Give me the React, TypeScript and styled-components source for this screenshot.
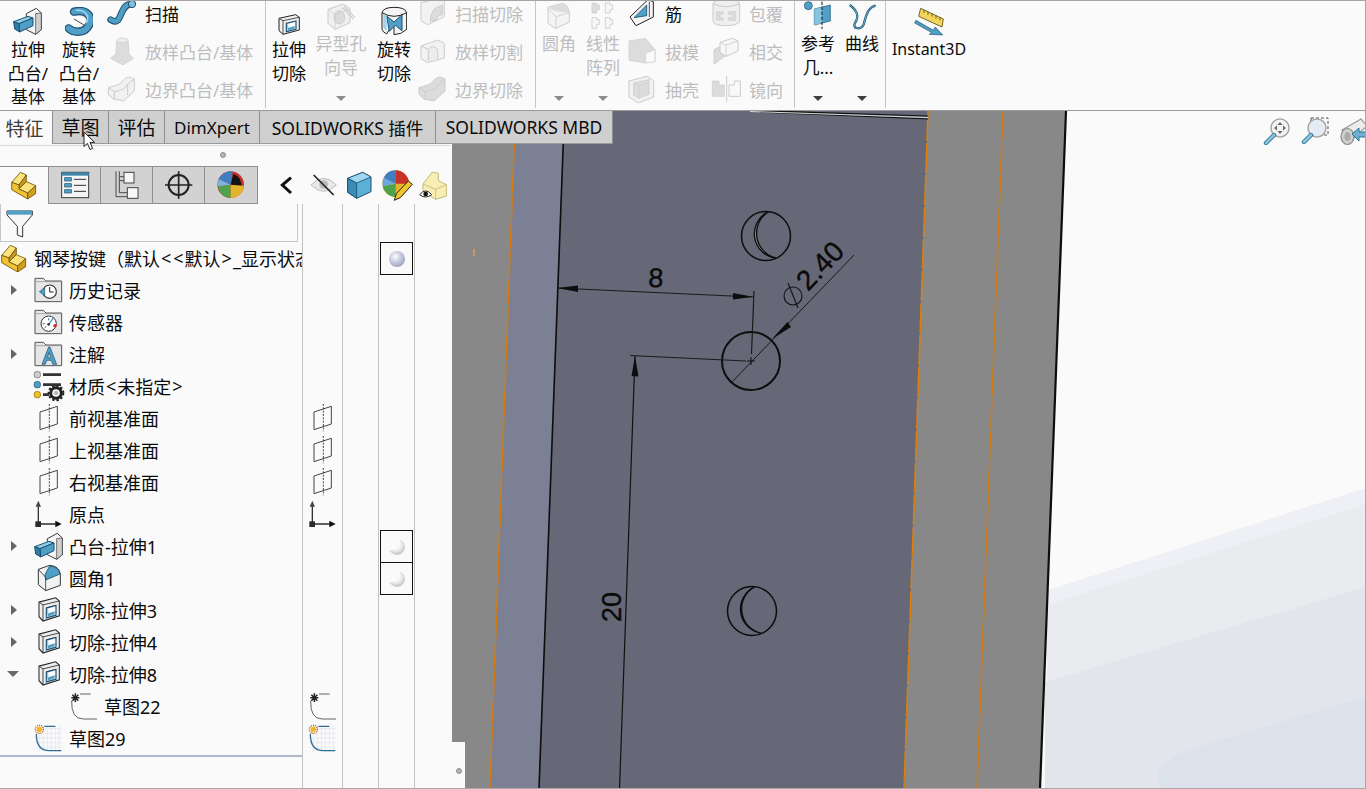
import React from 'react';
import styled, { createGlobalStyle } from 'styled-components';

const Global = createGlobalStyle`
  html, body { margin: 0; padding: 0; background: #fafafa; }
  * { box-sizing: border-box; }
`;

const FONT = `"Noto Sans", "Noto Sans CJK SC", sans-serif`;
const OFF = '#bdbdbd';

/* ---------- page frame ---------- */
const App_ = styled.div`
  width: 1366px; height: 789px; display: flex; flex-direction: column; overflow: hidden;
  background: #fafafa; border-top: 1px solid #a5a5a5; border-right: 1px solid #a8a8a8; border-bottom: 1px solid #a8a8a8;
  font-family: ${FONT}; color: #0a0a0a;
`;
const Ribbon = styled.div`
  height: 110px; flex: none; display: flex; align-items: flex-start; border-bottom: 1px solid #9c9c9c; overflow: hidden;
`;
const Group = styled.div<{ $w: number; $pad?: number }>`
  width: ${p => p.$w}px; height: 107px; flex: none; display: flex; padding-left: ${p => p.$pad ?? 0}px;
  border-right: 1px solid #c4c4c4;
`;
const LargeBtn = styled.div<{ $w: number; $off?: boolean; $fs?: number }>`
  width: ${p => p.$w}px; height: 107px; flex: none; display: flex; flex-direction: column; align-items: center;
  font-size: ${p => p.$fs ?? 17}px; line-height: 23.5px; color: ${p => (p.$off ? OFF : '#0a0a0a')}; white-space: nowrap;
`;
const LargeIcon = styled.div<{ $h: number }>`
  height: ${p => p.$h}px; flex: none; display: flex; align-items: flex-end; justify-content: center; padding-bottom: 2px;
  svg { display: block; flex: none; }
`;
const Caret = styled.i<{ $off?: boolean }>`
  margin-top: auto; margin-bottom: 7px; width: 0; height: 0;
  border-left: 5px solid transparent; border-right: 5px solid transparent;
  border-top: 5px solid ${p => (p.$off ? '#8c8c8c' : '#404040')};
`;
const SmallCol = styled.div<{ $w: number; $ml?: number }>`
  width: ${p => p.$w}px; flex: none; margin-left: ${p => p.$ml ?? 0}px; margin-top: -7px; display: flex; flex-direction: column;
`;
const SmallBtn = styled.div<{ $off?: boolean }>`
  height: 38px; display: flex; align-items: center; font-size: 17px; white-space: nowrap;
  color: ${p => (p.$off ? OFF : '#0a0a0a')};
`;
const SmallIcon = styled.div`
  width: 30px; margin-right: 8px; flex: none; display: flex; justify-content: center;
  svg { display: block; flex: none; }
`;

/* ---------- main ---------- */
const Main = styled.div`
  flex: 1; min-height: 0; display: flex; position: relative;
`;
const TabBar = styled.div`
  position: absolute; top: -1px; left: 0; display: flex; height: 34px; z-index: 3;
`;
const Tab = styled.div<{ $w: number; $on?: boolean; $fs?: number }>`
  width: ${p => p.$w}px; height: 34px; flex: none; display: flex; align-items: center; justify-content: center;
  font-size: ${p => p.$fs ?? 18}px; white-space: nowrap;
  padding-right: ${p => (p.$on ? 3 : 0)}px;
  color: ${p => (p.$on ? '#3c3c3c' : '#0a0a0a')};
  background: ${p => (p.$on ? 'transparent' : '#cfcfcf')};
  border-right: 1px solid #8e8e8e; border-top: 1px solid #9c9c9c;
  border-bottom: ${p => (p.$on ? 'none' : '1px solid #9a9a9a')};
`;
const Cursor = styled.svg`
  position: absolute; left: 83px; top: 20px; z-index: 4;
`;

const Sidebar = styled.aside`
  width: 452px; flex: none; display: flex; flex-direction: column; padding-top: 32px; background: #fafafa;
`;
const Grip = styled.div`
  height: 21px; flex: none; margin-top: 2px; border-top: 1px solid #d8d8d8; display: flex; align-items: center; justify-content: center;
  margin-right: 2px; padding-bottom: 3px; padding-right: 4px;
`;
const Dot = styled.i`
  width: 6px; height: 6px; border-radius: 50%; background: #b4b4b4; border: 1px solid #8f8f8f;
`;
const FeatureBar = styled.div`
  height: 38px; flex: none; display: flex; align-items: stretch;
`;
const FeatureTab = styled.div<{ $on?: boolean; $w?: number }>`
  width: ${p => p.$w ?? 52}px; flex: none; display: flex; align-items: center; justify-content: center;
  background: ${p => (p.$on ? 'transparent' : '#d2d2d2')};
  border-right: 1px solid #8e8e8e; border-top: 1px solid #8e8e8e;
  border-bottom: ${p => (p.$on ? 'none' : '1px solid #8e8e8e')};
`;
const ToolStrip = styled.div`
  flex: 1; display: flex; align-items: center; padding-left: 21px; gap: 8px;
  svg { display: block; flex: none; }
  svg:first-child { margin-right: 8px; }
  svg:last-child { margin-left: -3px; }
`;
const Columns = styled.div`
  flex: 1; min-height: 0; display: flex;
`;
const TreeCol = styled.div`
  width: 302px; flex: none; overflow: hidden;
`;
const Filter = styled.div`
  width: 298px; height: 38px; border: 1px solid #c6c6c6; border-top: none; padding-left: 5px; padding-top: 2px; display: flex; align-items: center;
`;
const Rows = styled.div`
  border-bottom: 2px solid #b3b7cb; padding-bottom: 1px;
`;
const Row = styled.div<{ $indent?: number }>`
  height: 32px; display: flex; align-items: center; padding-left: ${p => p.$indent ?? 0}px;
  font-size: 18px; white-space: nowrap; color: #0a0a0a;
`;
const Angle = styled.span`
  padding: 0 1px;
`;
const ArrowSlot = styled.div`
  width: 26px; flex: none; display: flex; justify-content: center;
`;
const Arrow = styled.i<{ $open?: boolean }>`
  width: 0; height: 0;
  ${p => p.$open
    ? 'border-left: 6px solid transparent; border-right: 6px solid transparent; border-top: 6px solid #6a6a6a;'
    : 'border-top: 5px solid transparent; border-bottom: 5px solid transparent; border-left: 6px solid #666; margin-left:1px;'}
`;
const TreeIcon = styled.div`
  width: 29px; margin-left: 8px; margin-right: 6px; flex: none; display: flex; justify-content: center;
  svg { display: block; flex: none; }
`;
const RootIcon = styled.div`
  width: 27px; margin-left: 1px; margin-right: 6px; flex: none; display: flex;
  svg { display: block; flex: none; }
`;
const Col = styled.div<{ $w: number }>`
  width: ${p => p.$w}px; flex: none; border-left: 1px solid #c2c2c2; padding-top: 38px; overflow: hidden;
`;
const Slot = styled.div`
  height: 32px; display: flex; align-items: center; justify-content: center;
  svg { display: block; flex: none; }
`;
const SphereSlot = styled.div`
  height: 32px; padding-left: 1px;
`;
const SphereBox = styled.div`
  width: 33px; height: 33px; border: 1px solid #111; display: flex; align-items: center; justify-content: center; background: #fafafa;
`;

const Viewport = styled.main`
  flex: 1; min-width: 0; position: relative; overflow: hidden; background: #fafafa;
  > svg { display: block; }
`;
const ViewTools = styled.div`
  position: absolute; top: 6px; right: -1px; display: flex; gap: 10px;
  svg { display: block; }
`;
const CornerBlock = styled.div`
  position: absolute; left: 0; bottom: 0; width: 13px; height: 46px; background: #fafafa;
  display: flex; align-items: center; justify-content: center; padding-top: 11px;
`;

/* ---------- icon helper: coordinates are 3x those of the screen ---------- */
const Ico: React.FC<{ vb: string; h?: number; children: React.ReactNode }> = ({ vb, h, children }) => {
  const [, , vw, vh] = vb.split(' ').map(Number);
  return <svg width={vw / 3} height={h ?? vh / 3} viewBox={vb} preserveAspectRatio={h ? 'none' : undefined}>{children}</svg>;
};
const DS = '#cbcbcb';
const DF = '#ececec';
const DM = '#dcdcdc';
const BL = '#4f9fc6';
const BD = '#1c4f70';

const Boss = () => (
  <Ico vb="40 22 88 86">
    <path d="M80 42 L110 26 L125 40 V90 L108 104 L80 90Z" fill="#f4f4f4" stroke="#3a3a3a" strokeWidth="3" />
    <path d="M108 42 L125 40 V90 L108 104Z" fill="#cfcfcf" stroke="#3a3a3a" strokeWidth="2" />
    <path d="M42 66 L85 50 L100 55 L58 72Z" fill="#8fd0e8" stroke={BD} strokeWidth="3" />
    <path d="M58 72 L100 55 V78 L60 97Z" fill={BL} stroke={BD} strokeWidth="3" />
    <path d="M42 66 L58 72 L60 97 L45 88Z" fill="#2f7ea6" stroke={BD} strokeWidth="3" />
  </Ico>
);
const RevBoss = () => (
  <Ico vb="195 22 84 88">
    <path d="M222 36 C268 26 282 60 262 84 C248 102 218 98 206 86" fill="none" stroke={BD} strokeWidth="25" strokeLinecap="round" />
    <path d="M222 36 C268 26 282 60 262 84 C248 102 218 98 206 86" fill="none" stroke={BL} strokeWidth="18" strokeLinecap="round" />
    <path d="M228 32 C258 30 270 50 258 70" fill="none" stroke="#9fd6ec" strokeWidth="5" />
    <path d="M222 58 L252 76" stroke="#222" strokeWidth="2.5" />
  </Ico>
);
const Sweep = () => (
  <Ico vb="322 0 94 84">
    <path d="M336 62 C372 86 360 16 396 16" fill="none" stroke={BD} strokeWidth="20" strokeLinecap="round" />
    <path d="M336 62 C372 86 360 16 396 16" fill="none" stroke={BL} strokeWidth="14" strokeLinecap="round" />
    <circle cx="400" cy="15" r="11" fill="#7fc0de" stroke={BD} strokeWidth="3" />
  </Ico>
);
const Loft = () => (
  <Ico vb="332 108 76 84">
    <path d="M355 120 Q372 108 390 120 L392 160 L406 172 L374 192 L336 172 L352 160Z" fill={DM} stroke={DS} strokeWidth="2" />
    <ellipse cx="372" cy="118" rx="17" ry="7" fill={DF} stroke={DS} strokeWidth="2" />
  </Ico>
);
const Boundary = () => (
  <Ico vb="326 224 88 84">
    <path d="M330 262 C350 255 365 255 375 240 C385 228 395 228 408 236 V272 L375 302 L345 296 L330 282Z" fill="#f1f1f1" stroke={DS} strokeWidth="3" />
    <path d="M330 262 L348 274 C362 270 378 270 388 252 L408 236 M348 274 V296 M388 252 V284" fill="none" stroke={DS} strokeWidth="3" />
  </Ico>
);
const Hole = () => (
  <Ico vb="978 2 90 85">
    <path d="M984 24 L1030 8 L1050 22 V64 L1006 84 L984 66Z" fill="#f0f0f0" stroke={DS} strokeWidth="3" />
    <ellipse cx="1018" cy="48" rx="16" ry="20" fill={DM} stroke={DS} strokeWidth="3" />
    <path d="M1030 18 L1062 50" stroke={DS} strokeWidth="12" strokeDasharray="4 3" />
    <path d="M984 24 L1006 40 L1050 22 M1006 40 V84" fill="none" stroke={DS} strokeWidth="2" />
  </Ico>
);
const Cut: React.FC<{ h?: number }> = ({ h }) => (
  <Ico vb="832 42 72 66" h={h}>
    <path d="M838 55 L888 44 L899 52 V90 L850 103 L838 92Z" fill="#efefef" stroke="#222" strokeWidth="3" />
    <path d="M850 62 L899 52 M850 62 V103 M850 62 L838 55" fill="none" stroke="#333" strokeWidth="2.5" />
    <path d="M860 70 L889 63 V88 L860 95Z" fill="#fdfdfd" stroke={BD} strokeWidth="3.5" />
    <path d="M864 84 L885 78 V86 L864 92Z" fill={BL} />
    <path d="M862 72 L866 74 V84 L862 90Z" fill="#8ecbe5" />
  </Ico>
);
const RevCut = () => (
  <Ico vb="1143 18 80 90">
    <path d="M1146 38 Q1150 22 1182 22 Q1216 22 1220 38 V88 Q1204 104 1182 104 L1182 66 L1160 102 Q1148 96 1146 88Z" fill="#f4f4f4" stroke="#222" strokeWidth="3" />
    <path d="M1160 48 L1182 66 L1206 44 L1206 92 L1186 76 L1168 94Z" fill={BL} stroke={BD} strokeWidth="3" />
    <path d="M1146 38 Q1182 60 1220 38" fill="none" stroke="#222" strokeWidth="3" />
    <path d="M1150 42 L1160 48 V92 L1150 84Z" fill="#9ed3ea" />
  </Ico>
);
const SweepCut = () => (
  <Ico vb="1262 0 80 88">
    <path d="M1268 14 L1320 2 L1338 8 V56 L1288 80 L1268 68Z" fill="#f2f2f2" stroke={DS} strokeWidth="3" />
    <path d="M1296 70 Q1296 28 1332 22 V50 Q1314 52 1314 66Z" fill={DM} stroke={DS} strokeWidth="3" />
  </Ico>
);
const LoftCut = () => (
  <Ico vb="1262 106 80 78">
    <path d="M1268 130 L1318 112 L1338 122 V166 L1288 180 L1268 168Z" fill="#f2f2f2" stroke={DS} strokeWidth="3" />
    <path d="M1290 176 V140 Q1302 124 1318 140 V168" fill={DF} stroke={DS} strokeWidth="3" />
    <path d="M1268 130 L1290 140" stroke={DS} strokeWidth="3" />
  </Ico>
);
const BoundaryCut = () => (
  <Ico vb="1256 224 88 84">
    <path d="M1262 262 C1282 255 1297 255 1307 240 C1317 228 1327 228 1340 236 V272 L1307 302 L1277 296 L1262 282Z" fill={DM} stroke={DS} strokeWidth="3" />
    <path d="M1262 262 L1280 274 C1294 270 1310 270 1320 252 L1340 236 M1280 274 V296" fill="none" stroke={DS} strokeWidth="3" />
  </Ico>
);
const Fillet = () => (
  <Ico vb="262 2 76 84">
    <path d="M268 18 L312 6 Q330 12 332 34 V62 L290 82 L268 66Z" fill="#f3f3f3" stroke={DS} strokeWidth="3" />
    <path d="M270 20 L292 30 L332 34 Q328 14 312 8Z" fill={DM} />
    <path d="M292 46 L332 34 M292 46 V82 M268 22 L292 46" fill="none" stroke={DS} strokeWidth="2.5" />
  </Ico>
);
const Pattern = () => (
  <Ico vb="392 2 76 86">
    <path d="M398 12 H412 V18 H420 V32 H412 V42 H398Z" fill={DM} stroke={DS} strokeWidth="2" transform="translate(0 -4)" />
    <path d="M438 8 H452 V14 H460 V28 H452 V38 H438Z" fill="#f7f7f7" stroke={DS} strokeWidth="2.5" />
    <path d="M398 52 H412 V58 H420 V72 H412 V84 H398Z" fill="#f7f7f7" stroke={DS} strokeWidth="2.5" />
    <path d="M438 52 H452 V58 H460 V72 H452 V84 H438Z" fill="#f7f7f7" stroke={DS} strokeWidth="2.5" />
  </Ico>
);
const Rib = () => (
  <Ico vb="506 0 82 84">
    <path d="M512 54 L566 2 L582 8 V54 L530 80Z" fill="#f4f4f4" stroke="#222" strokeWidth="3" />
    <path d="M524 56 L562 18 L562 50Z" fill={BL} stroke={BD} strokeWidth="2.5" />
    <path d="M570 8 V54" stroke="#333" strokeWidth="2.5" />
  </Ico>
);
const Wrap = () => (
  <Ico vb="756 0 90 84">
    <path d="M762 14 Q764 0 800 0 Q840 0 842 14 V66 Q838 80 800 80 Q764 80 762 66Z" fill="#efefef" stroke={DS} strokeWidth="3" />
    <path d="M762 14 Q800 32 842 14" fill="none" stroke={DS} strokeWidth="3" />
    <path d="M772 38 H792 V46 H782 V56 H792 V64 H772Z M808 38 H830 V64 H808 V56 H820 V46 H808Z" fill={DM} stroke={DS} strokeWidth="2" />
  </Ico>
);
const Draft = () => (
  <Ico vb="504 112 88 82">
    <path d="M510 124 L560 116 L588 150 V186 L556 190 L510 182Z" fill={DM} stroke={DS} strokeWidth="2" />
    <path d="M560 160 L588 150 V186 L560 190Z" fill="#fafafa" stroke={DS} strokeWidth="2" />
  </Ico>
);
const Intersect = () => (
  <Ico vb="758 108 84 86">
    <path d="M764 146 L796 130 V166 L764 190Z" fill={DM} stroke={DS} strokeWidth="2.5" />
    <path d="M782 124 L818 112 L836 120 V150 L800 166 L782 154Z" fill="#f7f7f7" stroke={DS} strokeWidth="3" />
    <path d="M782 124 L800 132 L836 120 M800 132 V166" fill="none" stroke={DS} strokeWidth="2.5" />
  </Ico>
);
const Shell = () => (
  <Ico vb="506 222 88 86">
    <path d="M512 240 L566 226 L586 240 V288 L540 306 L512 288Z" fill="#f2f2f2" stroke={DS} strokeWidth="3" />
    <path d="M526 246 L572 236 V280 L540 292 L526 282Z" fill={DM} stroke={DS} strokeWidth="2.5" />
    <path d="M526 246 L542 256 L572 246 M542 256 V292" fill="none" stroke={DS} strokeWidth="2" />
  </Ico>
);
const Mirror = () => (
  <Ico vb="756 224 92 84">
    <path d="M760 242 H780 V254 H796 V288 H760Z" fill={DM} stroke={DS} strokeWidth="2" />
    <path d="M803 228 V304" stroke={DS} strokeWidth="3" />
    <path d="M844 242 H826 V254 H810 V288 H844Z" fill="#f9f9f9" stroke={DS} strokeWidth="3" />
  </Ico>
);
const RefGeom = () => (
  <Ico vb="1030 2 88 86">
    <circle cx="1046" cy="16" r="12" fill={BL} stroke={BD} strokeWidth="2" />
    <path d="M1064 26 L1112 14 V62 L1064 74Z" fill={BL} stroke={BD} strokeWidth="2" />
    <path d="M1064 26 L1088 20 V68 L1064 74Z" fill="#86c3de" />
    <path d="M1087 4 V86" stroke="#111" strokeWidth="3" strokeDasharray="10 5" />
  </Ico>
);
const Curves = () => (
  <Ico vb="1162 6 92 82">
    <path d="M1170 12 C1190 26 1200 46 1186 66 C1176 84 1206 88 1212 70 C1220 40 1226 18 1248 14" fill="none" stroke={BD} strokeWidth="7" />
    <path d="M1170 12 C1190 26 1200 46 1186 66 C1176 84 1206 88 1212 70 C1220 40 1226 18 1248 14" fill="none" stroke="#6fb5d6" strokeWidth="3" />
  </Ico>
);
const Instant = () => (
  <Ico vb="1362 22 92 88">
    <path d="M1382 26 L1450 58 L1446 82 L1376 50Z" fill="#f2d75c" stroke="#5a4a10" strokeWidth="2.5" />
    <path d="M1392 30 V40 M1404 36 V46 M1416 41 V51 M1428 47 V57 M1440 52 V62" stroke="#5a4a10" strokeWidth="2.5" />
    <path d="M1368 62 L1420 92 L1426 82 L1448 106 L1408 104 L1414 98 L1364 70Z" fill={BL} stroke={BD} strokeWidth="2" />
  </Ico>
);

/* tree icons */
const Part: React.FC = () => (
  <Ico vb="6 116 78 86">
    <path d="M8 150 L34 120 L52 128 L30 158Z" fill="#fbe27a" stroke="#6d5510" strokeWidth="2.5" />
    <path d="M30 158 L52 128 V148 L30 170Z" fill="#c8961c" stroke="#6d5510" strokeWidth="2.5" />
    <path d="M30 170 L52 148 L80 160 L56 182Z" fill="#fbe27a" stroke="#6d5510" strokeWidth="2.5" />
    <path d="M8 150 L30 158 V170 L56 182 V200 L8 172Z" fill="#eec233" stroke="#6d5510" strokeWidth="2.5" />
    <path d="M56 182 L80 160 V184 L56 200Z" fill="#d09f1e" stroke="#6d5510" strokeWidth="2.5" />
  </Ico>
);
const Folder: React.FC<{ children: React.ReactNode }> = ({ children }) => (
  <Ico vb="104 218 86 78">
    <path d="M107 292 V222 H132 L140 230 H187 V292Z" fill="#e6e6e6" stroke="#555" strokeWidth="3" />
    <path d="M107 232 H187" stroke="#888" strokeWidth="2" />
    {children}
  </Ico>
);
const Material = () => (
  <Ico vb="98 493 96 94">
    <circle cx="111" cy="507" r="10" fill="#cfcfcf" stroke="#666" strokeWidth="2" />
    <circle cx="111" cy="537" r="10" fill={BL} stroke={BD} strokeWidth="2" />
    <circle cx="111" cy="567" r="10" fill="#f0c020" stroke="#8a6a10" strokeWidth="2" />
    <path d="M128 507 H182 M128 537 H182 M128 567 H146" stroke="#333" strokeWidth="8" />
    <circle cx="167" cy="562" r="16" fill="none" stroke="#222" strokeWidth="9" />
    <circle cx="167" cy="562" r="22" fill="none" stroke="#222" strokeWidth="6" strokeDasharray="7 6" />
    <circle cx="167" cy="562" r="7" fill="#bbb" />
  </Ico>
);
const Plane = () => (
  <Ico vb="118 596 60 82">
    <path d="M121 620 L173 603 V656 L121 673Z" fill="none" stroke="#444" strokeWidth="3" />
    <path d="M149 596 V678" stroke="#222" strokeWidth="2.5" strokeDasharray="6 4" />
  </Ico>
);
const Origin = () => (
  <Ico vb="104 0 86 82">
    <path d="M117 72 V14" stroke="#333" strokeWidth="4" />
    <path d="M117 2 L125 20 H109Z" fill="#444" />
    <path d="M117 72 H172" stroke="#111" strokeWidth="4" />
    <path d="M187 72 L168 62 V82Z" fill="#111" />
    <rect x="108" y="64" width="17" height="17" fill="#2a2a2a" />
  </Ico>
);
const Fillet1 = () => (
  <Ico vb="112 192 72 82">
    <path d="M116 208 L150 196 Q178 198 182 222 V256 L138 272 L116 254Z" fill="#f1f2f4" stroke="#333" strokeWidth="3" />
    <path d="M136 224 L150 198 Q176 200 181 222 L138 240Z" fill={BL} stroke={BD} strokeWidth="2.5" />
    <path d="M116 208 L138 232 V272" fill="none" stroke="#333" strokeWidth="2.5" />
  </Ico>
);
const SketchBlack = () => (
  <Ico vb="210 574 84 84">
    <path d="M215 600 Q213 655 250 655 H291 M240 580 H272" fill="none" stroke="#444" strokeWidth="2.5" />
    <path d="M226 578 V604 M214 591 H238 M217 582 L235 600 M235 582 L217 600" stroke="#222" strokeWidth="4.5" />
  </Ico>
);
const SketchBlue = () => {
  const g = [120, 132, 144, 156, 168, 180];
  return (
    <Ico vb="104 670 86 86">
      {g.map(v => <path key={v} d={`M${v} 674 V754`} stroke="#dfe3ec" strokeWidth="2" />)}
      {[684, 698, 712, 726, 740].map(v => <path key={v} d={`M108 ${v} H188`} stroke="#dfe3ec" strokeWidth="2" />)}
      <path d="M111 700 Q111 750 150 750 H186 M135 677 H168" fill="none" stroke="#2d6f99" strokeWidth="4" />
      <circle cx="120" cy="686" r="8" fill="#f2b420" />
      <circle cx="120" cy="686" r="12" fill="none" stroke="#b8560c" strokeWidth="4" strokeDasharray="3 3" />
    </Ico>
  );
};
const ClockFace = () => (
  <g>
    <circle cx="151" cy="262" r="20" fill="#fff" stroke="#333" strokeWidth="3.5" />
    <path d="M151 248 V263 H163" fill="none" stroke="#222" strokeWidth="3" />
    <path d="M120 262 L136 250 V274Z" fill={BL} stroke={BD} strokeWidth="2" />
  </g>
);
const GaugeFace = () => (
  <g>
    <circle cx="148" cy="262" r="23" fill="#fff" stroke="#333" strokeWidth="3" />
    <path d="M148 264 L164 242" stroke={BL} strokeWidth="4" />
    <circle cx="148" cy="264" r="4" fill="#333" />
    <path d="M130 262 H136 M148 246 V252 M136 274 L141 270" stroke="#333" strokeWidth="2.5" />
    <circle cx="167" cy="268" r="5" fill="#e02020" />
  </g>
);
const LetterA = () => (
  <path d="M148 236 L128 288 H138 L142 276 H156 L160 288 H172 L152 236Z M145 268 L149 252 L154 268Z" fill={BL} stroke={BD} strokeWidth="2" fillRule="evenodd" />
);

/* toolbar icons */
const Ball: React.FC = () => (
  <Ico vb="650 512 88 84">
    <circle cx="694" cy="553" r="40" fill="#c8302a" />
    <path d="M694 553 L702 520 Q730 530 726 566Z" fill="#141414" />
    <path d="M694 553 L658 536 A40 40 0 0 1 700 513.4Z" fill="#3f7fc0" />
    <path d="M694 553 L656 558 A40 40 0 0 0 694 593Z" fill="#4ea24a" />
    <path d="M694 553 L694 593 A40 40 0 0 0 734 556Z" fill="#e3b32a" />
    <path d="M694 553 L658 536 A40 40 0 0 0 655 558Z" fill="#7fb2de" />
  </Ico>
);
const ListIcon = () => (
  <Ico vb="180 514 90 84">
    <rect x="185" y="518" width="81" height="76" fill="#f5f5f5" stroke="#3a3a3a" strokeWidth="3" />
    <rect x="185" y="518" width="81" height="10" fill="#3f86ad" />
    {[538, 556, 574].map(y => (
      <g key={y}>
        <rect x="194" y={y - 4} width="20" height="10" fill={BL} stroke={BD} strokeWidth="2" />
        <path d={`M222 ${y + 1} H258`} stroke="#333" strokeWidth="3" />
      </g>
    ))}
  </Ico>
);
const ConfigIcon = () => (
  <Ico vb="344 510 78 90">
    <path d="M350 514 V590 H384 M360 514 V578 H384 M360 530 H374 M360 542 H374" stroke="#4a4a4a" strokeWidth="3" fill="none" />
    <rect x="374" y="517" width="30" height="32" fill="#f7f7f7" stroke="#444" strokeWidth="3" />
    <rect x="384" y="563" width="32" height="32" fill="#f7f7f7" stroke="#444" strokeWidth="3" />
  </Ico>
);
const Cross = () => (
  <Ico vb="494 510 88 90">
    <circle cx="538" cy="555" r="30" fill="none" stroke="#222" strokeWidth="6" />
    <path d="M538 514 V596 M497 555 H579" stroke="#222" strokeWidth="5" />
  </Ico>
);
const Chevron = () => (
  <Ico vb="836 518 42 60">
    <path d="M872 526 L846 548 L872 572" fill="none" stroke="#111" strokeWidth="9" />
  </Ico>
);
const Eye = () => (
  <Ico vb="926 516 88 72">
    <path d="M932 552 Q970 512 1008 552 Q970 590 932 552Z" fill="#e8e8e8" stroke="#bbb" strokeWidth="3" />
    <circle cx="970" cy="550" r="13" fill="#bbb" />
    <path d="M940 522 L1000 582" stroke="#222" strokeWidth="5" />
  </Ico>
);
const Cube = () => (
  <Ico vb="1040 508 80 86">
    <path d="M1045 530 L1090 512 L1115 526 V570 L1072 590 L1045 572Z" fill="#5cb0d6" stroke={BD} strokeWidth="3" />
    <path d="M1045 530 L1072 544 L1115 526 L1090 512Z" fill="#9fd7ee" stroke={BD} strokeWidth="2.5" />
    <path d="M1072 544 V590 L1045 572 V530Z" fill="#3a8cb6" stroke={BD} strokeWidth="2.5" />
  </Ico>
);
const BallPencil = () => (
  <Ico vb="1142 504 98 96">
    <circle cx="1186" cy="548" r="40" fill="#e3b32a" />
    <path d="M1186 548 L1150 530 A40 40 0 0 1 1186 508Z" fill="#3f7fc0" />
    <path d="M1186 548 V508 A40 40 0 0 1 1226 548Z" fill="#c8302a" />
    <path d="M1186 548 L1147 556 A40 40 0 0 0 1186 588Z" fill="#4ea24a" />
    <path d="M1150 530 L1186 548 L1147 556 A40 40 0 0 1 1150 530Z" fill="#6aa6dc" />
    <path d="M1224 540 L1236 550 L1200 590 L1182 598 L1188 578Z" fill="#f2c530" stroke="#222" strokeWidth="3" />
  </Ico>
);
const YellowEye = () => (
  <Ico vb="1260 508 88 90">
    <path d="M1272 550 L1300 514 L1318 518 V540 L1342 552 V586 L1310 596 L1272 572Z" fill="#f8eeb4" stroke="#c4b878" strokeWidth="3" />
    <path d="M1310 566 L1342 552 M1310 566 V596 M1272 550 L1310 566" fill="none" stroke="#c4b878" strokeWidth="2.5" />
    <path d="M1262 582 Q1280 560 1298 582 Q1280 596 1262 582Z" fill="#fff" stroke="#222" strokeWidth="3" />
    <circle cx="1280" cy="580" r="7" fill="#111" />
  </Ico>
);

const Sphere: React.FC<{ blue?: boolean }> = ({ blue }) => (
  <svg width="18" height="18" viewBox="0 0 18 18">
    <defs>
      <radialGradient id={blue ? 'sb' : 'sg'} cx="0.4" cy="0.35" r="0.7">
        <stop offset="0" stopColor="#fff" />
        <stop offset="0.45" stopColor={blue ? '#ccd0e2' : '#f4f4f4'} />
        <stop offset="1" stopColor={blue ? '#9a9fbc' : '#bdbdbd'} />
      </radialGradient>
    </defs>
    {blue
      ? <circle cx="9" cy="9" r="8" fill="url(#sb)" />
      : <path d="M12 1.5 A8 8 0 1 1 1.5 12 A9 9 0 0 0 12 1.5Z" fill="url(#sg)" />}
  </svg>
);

/* ---------- the 3D view ---------- */
const Model = () => (
  <svg width="914" height="677" viewBox="452 111 914 677">
    <defs>
      <linearGradient id="hole" x1="0" y1="0" x2="0" y2="1">
        <stop offset="0" stopColor="#70738a" />
        <stop offset="0.32" stopColor="#7f8399" />
        <stop offset="0.42" stopColor="#8a8a8a" />
        <stop offset="0.72" stopColor="#8e8e8e" />
        <stop offset="0.85" stopColor="#a3a5b6" />
        <stop offset="1" stopColor="#b4b6c4" />
      </linearGradient>
    </defs>
    <rect x="452" y="111" width="914" height="678" fill="#fafafa" />
    <path d="M1366 488 L1048 590 V789 H1366Z" fill="#eef0f5" />
    <path d="M1366 504 L1047 605 V789 H1366Z" fill="#eaebef" />
    <path d="M1366 587 L1045 682 V789 H1366Z" fill="#e2e5ec" />
    <path d="M1366 697 L1205 745 Q1158 760 1157 775 Q1158 783 1163 789 H1366Z" fill="#dce2eb" />

    <path d="M452 111 H1066 L1040 789 H452Z" fill="#888888" />
    <path d="M515.5 111 H564.5 L539 789 H490Z" fill="#7c8095" />
    <path d="M564.5 111 H928 L904 789 H539Z" fill="#666877" />

    <path d="M515.5 111 L490 789" stroke="#d97a08" strokeWidth="1.5" strokeDasharray="26 2" fill="none" />
    <path d="M928 111 L904 789" stroke="#e07f08" strokeWidth="1.5" strokeDasharray="30 2" fill="none" />
    <path d="M1003 111 L977 789" stroke="#cf7a10" strokeWidth="1.5" strokeDasharray="30 2" fill="none" />
    <path d="M474 249 V256" stroke="#d9a060" strokeWidth="1.5" />
    <path d="M564.5 111 L539 789" stroke="#0d0d0d" strokeWidth="1.6" fill="none" />
    <path d="M1066 111 L1040 789" stroke="#0d0d0d" strokeWidth="2.2" fill="none" />
    <path d="M737 110 L928 116" stroke="#111" strokeWidth="1.2" />
    <path d="M760 112 L928 119" stroke="#111" strokeWidth="1.2" />
    <path d="M750 111.5 L928 117.5" stroke="#d8d8d8" strokeWidth="1" />

    {/* holes */}
    <circle cx="766" cy="236" r="24.5" fill="#666877" stroke="#0d0d0d" strokeWidth="1.5" />
    <path d="M768.5 211.6 A24.5 24.5 0 0 0 776.5 258.2 A25.6 25.6 0 0 1 768.5 211.6Z" fill="url(#hole)" stroke="#0d0d0d" strokeWidth="1.3" />
    <circle cx="752" cy="611" r="24.5" fill="#666877" stroke="#0d0d0d" strokeWidth="1.5" />
    <path d="M755 586.7 A24.5 24.5 0 0 0 762 633.4 A25 25 0 0 1 755 586.7Z" fill="url(#hole)" stroke="#0d0d0d" strokeWidth="1.3" />

    {/* sketch circle */}
    <circle cx="751" cy="361" r="29" fill="none" stroke="#0d0d0d" strokeWidth="2" />
    <path d="M747 361 H755 M751 357 V365" stroke="#0d0d0d" strokeWidth="1" />
    <path d="M732 382 L854 255" stroke="#1a1a1a" strokeWidth="1" />
    <path d="M772 339 L787.5 322 L791 327Z" fill="#0d0d0d" />
    <circle cx="793" cy="296" r="9" fill="none" stroke="#111" strokeWidth="1.1" />
    <path d="M788 283 L798 308" stroke="#111" strokeWidth="1.1" />
    <text x="0" y="0" transform="translate(808 292) rotate(-46)" fontFamily="Liberation Sans, sans-serif" fontSize="28" fill="#0a0a0a" stroke="#0a0a0a" strokeWidth="0.4">2.40</text>

    {/* 8 */}
    <path d="M557 288 L753 297" stroke="#1a1a1a" strokeWidth="1.2" />
    <path d="M557 288 L578 285.5 L578 292Z" fill="#0d0d0d" />
    <path d="M753 296.8 L733 293 L733 299.5Z" fill="#0d0d0d" />
    <path d="M754 291 L751.5 354" stroke="#1a1a1a" strokeWidth="1.2" />
    <text x="656" y="287" textAnchor="middle" fontFamily="Liberation Sans, sans-serif" fontSize="27" fill="#0a0a0a" stroke="#0a0a0a" strokeWidth="0.4" transform="rotate(2.5 656 278)">8</text>

    {/* 20 */}
    <path d="M630 355.5 L746 361" stroke="#1a1a1a" strokeWidth="1.2" />
    <path d="M635 356 L619.5 789" stroke="#111" strokeWidth="1.2" />
    <path d="M635 356 L631.5 376 L638.5 376.5Z" fill="#0d0d0d" />
    <text x="0" y="0" textAnchor="middle" transform="translate(621 607) rotate(-90)" fontFamily="Liberation Sans, sans-serif" fontSize="27" fill="#0a0a0a" stroke="#0a0a0a" strokeWidth="0.4">20</text>
  </svg>
);

const ZoomFit = () => (
  <svg width="28" height="28" viewBox="0 0 28 28">
    <circle cx="17" cy="11" r="9" fill="#f4f4f4" stroke="#a8a8a8" strokeWidth="1.5" />
    <path d="M17 5 L19.5 8 H14.5Z M17 17 L14.5 14 H19.5Z M11 11 L14 8.5 V13.5Z M23 11 L20 8.5 V13.5Z" fill="#666" />
    <path d="M11 18 L3 26" stroke="#2d7295" strokeWidth="4.4" strokeLinecap="round" />
    <path d="M11 18 L3 26" stroke="#8cc6de" strokeWidth="2.6" strokeLinecap="round" />
  </svg>
);
const ZoomArea = () => (
  <svg width="28" height="28" viewBox="0 0 28 28">
    <rect x="10" y="1" width="17" height="17" fill="none" stroke="#555" strokeWidth="1" strokeDasharray="3 2" />
    <circle cx="16" cy="11" r="9" fill="#e6ecf4" stroke="#a8a8a8" strokeWidth="1.5" />
    <path d="M10 18 L3 25" stroke="#2d7295" strokeWidth="4.4" strokeLinecap="round" />
    <path d="M10 18 L3 25" stroke="#8cc6de" strokeWidth="2.6" strokeLinecap="round" />
  </svg>
);
const Binocular = () => (
  <svg width="27" height="29" viewBox="0 0 27 29">
    <path d="M3 13 L22 2 L28 9 L10 25 Z" fill="#ececec" stroke="#999" strokeWidth="1.2" />
    <ellipse cx="8.5" cy="19.5" rx="6.5" ry="8" fill="#cfcfcf" stroke="#8c8c8c" strokeWidth="1.2" />
    <ellipse cx="8.5" cy="19.5" rx="3" ry="4.5" fill="#aaa" />
    <path d="M13 17 L20 11 V15 H28 V20 H20 V24Z" fill="#6db0d2" stroke="#2d7295" strokeWidth="1" />
  </svg>
);

/* ---------- data ---------- */
type TreeItem = { label: React.ReactNode; indent?: number; arrow?: 'right' | 'down'; icon: React.ReactNode };
const folder = (c: React.ReactNode) => <Folder>{c}</Folder>;
const tree: TreeItem[] = [
  { label: '历史记录', arrow: 'right', icon: folder(<ClockFace />) },
  { label: '传感器', icon: folder(<GaugeFace />) },
  { label: '注解', arrow: 'right', icon: folder(<LetterA />) },
  { label: <>材质 <Angle>&lt;</Angle>未指定<Angle>&gt;</Angle></>, icon: <Material /> },
  { label: '前视基准面', icon: <Plane /> },
  { label: '上视基准面', icon: <Plane /> },
  { label: '右视基准面', icon: <Plane /> },
  { label: '原点', icon: <Origin /> },
  { label: '凸台-拉伸1', arrow: 'right', icon: <Boss /> },
  { label: '圆角1', icon: <Fillet1 /> },
  { label: '切除-拉伸3', arrow: 'right', icon: <Cut h={26} /> },
  { label: '切除-拉伸4', arrow: 'right', icon: <Cut h={26} /> },
  { label: '切除-拉伸8', arrow: 'down', icon: <Cut h={26} /> },
  { label: '草图22', indent: 35, icon: <SketchBlack /> },
  { label: '草图29', icon: <SketchBlue /> },
];
const thumbs: Record<number, React.ReactNode> = {
  4: <Plane />, 5: <Plane />, 6: <Plane />, 7: <Origin />, 13: <SketchBlack />, 14: <SketchBlue />,
};
const spheres: Record<number, boolean> = { [-1]: true, 8: false, 9: false };
const index = Array.from({ length: 16 }, (_, i) => i - 1);

const Lines: React.FC<{ t: string[] }> = ({ t }) => (
  <>{t.map(l => <span key={l}>{l}</span>)}</>
);
const Large: React.FC<{ w: number; h: number; off?: boolean; fs?: number; icon: React.ReactNode; t: string[]; caret?: boolean | 'off' }> =
  ({ w, h, off, fs, icon, t, caret }) => (
    <LargeBtn $w={w} $off={off} $fs={fs}>
      <LargeIcon $h={h}>{icon}</LargeIcon>
      <Lines t={t} />
      {caret && <Caret $off={caret === 'off'} />}
    </LargeBtn>
  );
const Small: React.FC<{ off?: boolean; icon: React.ReactNode; t: string }> = ({ off, icon, t }) => (
  <SmallBtn $off={off}><SmallIcon>{icon}</SmallIcon>{t}</SmallBtn>
);

export default function App() {
  return (
    <App_>
      <Global />
      <Ribbon>
        <Group $w={266} $pad={3}>
          <Large w={50} h={37} icon={<Boss />} t={['拉伸', '凸台/', '基体']} />
          <Large w={52} h={37} icon={<RevBoss />} t={['旋转', '凸台/', '基体']} />
          <SmallCol $w={150} $ml={2}>
            <Small icon={<Sweep />} t="扫描" />
            <Small off icon={<Loft />} t="放样凸台/基体" />
            <Small off icon={<Boundary />} t="边界凸台/基体" />
          </SmallCol>
        </Group>
        <Group $w={270}>
          <Large w={46} h={37} icon={<Cut />} t={['拉伸', '切除']} />
          <Large off w={58} h={31} icon={<Hole />} t={['异型孔', '向导']} caret="off" />
          <Large w={48} h={37} icon={<RevCut />} t={['旋转', '切除']} />
          <SmallCol $w={110} $ml={-1}>
            <Small off icon={<SweepCut />} t="扫描切除" />
            <Small off icon={<LoftCut />} t="放样切割" />
            <Small off icon={<BoundaryCut />} t="边界切除" />
          </SmallCol>
        </Group>
        <Group $w={259}>
          <Large off w={46} h={31} icon={<Fillet />} t={['圆角']} caret="off" />
          <Large off w={42} h={31} icon={<Pattern />} t={['线性', '阵列']} caret="off" />
          <SmallCol $w={84} $ml={3}>
            <Small icon={<Rib />} t="筋" />
            <Small off icon={<Draft />} t="拔模" />
            <Small off icon={<Shell />} t="抽壳" />
          </SmallCol>
          <SmallCol $w={80}>
            <Small off icon={<Wrap />} t="包覆" />
            <Small off icon={<Intersect />} t="相交" />
            <Small off icon={<Mirror />} t="镜向" />
          </SmallCol>
        </Group>
        <Group $w={91}>
          <Large w={46} h={31} icon={<RefGeom />} t={['参考', '几...']} caret />
          <Large w={42} h={31} icon={<Curves />} t={['曲线']} caret />
        </Group>
        <Large w={86} h={37} fs={16} icon={<Instant />} t={['Instant3D']} />
      </Ribbon>

      <Main>
        <TabBar>
          <Tab $w={53} $on $fs={19}>特征</Tab>
          <Tab $w={56} $fs={19}>草图</Tab>
          <Tab $w={56} $fs={19}>评估</Tab>
          <Tab $w={95} $fs={17}>DimXpert</Tab>
          <Tab $w={176} $fs={17.5}>SOLIDWORKS 插件</Tab>
          <Tab $w={177} $fs={17.5}>SOLIDWORKS MBD</Tab>
        </TabBar>
        <Cursor width="14" height="20" viewBox="0 0 14 20">
          <path d="M1 1 V15.5 L4.4 12.4 L7 18.5 L9.6 17.4 L7 11.4 H11.6Z" fill="#fff" stroke="#222" strokeWidth="1" />
        </Cursor>

        <Sidebar>
          <Grip><Dot /></Grip>
          <FeatureBar>
            <FeatureTab $on $w={49}><Part /></FeatureTab>
            <FeatureTab><ListIcon /></FeatureTab>
            <FeatureTab><ConfigIcon /></FeatureTab>
            <FeatureTab><Cross /></FeatureTab>
            <FeatureTab $w={53}><Ball /></FeatureTab>
            <ToolStrip>
              <Chevron />
              <Eye />
              <Cube />
              <BallPencil />
              <YellowEye />
            </ToolStrip>
          </FeatureBar>
          <Columns>
            <TreeCol>
              <Filter>
                <Ico vb="16 12 82 90">
                  <path d="M19 18 H95 V30 L66 64 V96 L50 90 V64 L19 30Z" fill="#f6f6f6" stroke="#333" strokeWidth="3" />
                  <rect x="20" y="17" width="74" height="12" fill="#4f9fc6" />
                </Ico>
              </Filter>
              <Rows>
                <Row>
                  <RootIcon><Part /></RootIcon>
                  钢琴按键（默认<Angle>&lt;</Angle><Angle>&lt;</Angle>默认<Angle>&gt;</Angle>_显示状态
                </Row>
                {tree.map((it, i) => (
                  <Row key={i} $indent={it.indent}>
                    <ArrowSlot>{it.arrow && <Arrow $open={it.arrow === 'down'} />}</ArrowSlot>
                    <TreeIcon>{it.icon}</TreeIcon>
                    {it.label}
                  </Row>
                ))}
              </Rows>
            </TreeCol>
            <Col $w={40}>
              {index.map(i => <Slot key={i}>{thumbs[i]}</Slot>)}
            </Col>
            <Col $w={36} />
            <Col $w={36}>
              {index.map(i => (
                <SphereSlot key={i}>
                  {i in spheres && <SphereBox><Sphere blue={spheres[i]} /></SphereBox>}
                </SphereSlot>
              ))}
            </Col>
            <Col $w={38} />
          </Columns>
        </Sidebar>

        <Viewport>
          <Model />
          <ViewTools>
            <ZoomFit />
            <ZoomArea />
            <Binocular />
          </ViewTools>
          <CornerBlock><Dot /></CornerBlock>
        </Viewport>
      </Main>
    </App_>
  );
}
